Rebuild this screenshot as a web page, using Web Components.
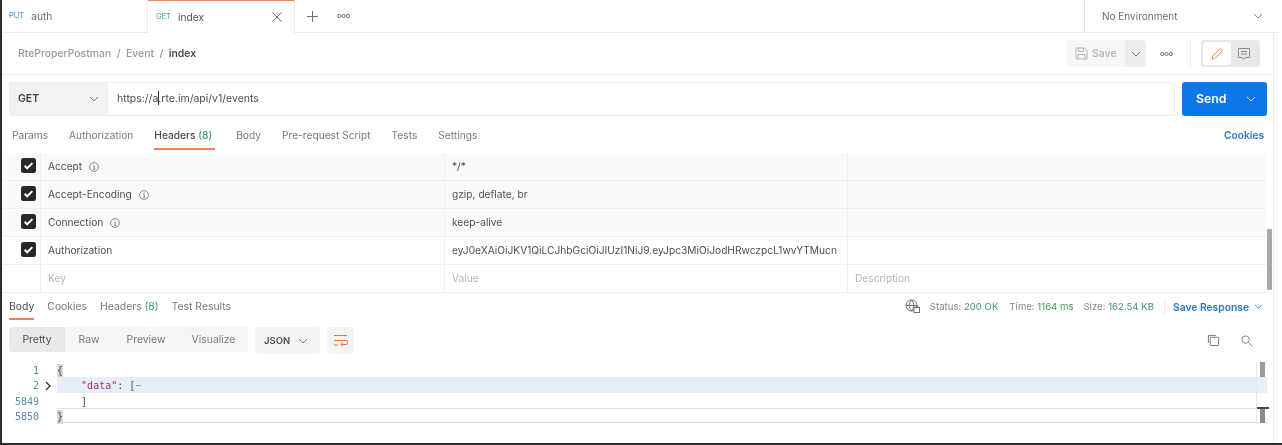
<!DOCTYPE html>
<html><head><meta charset="utf-8"><title>Postman</title>
<style>
html,body{margin:0;padding:0;background:#fff;height:445px;overflow:hidden}
body{font:11px/16px Inter,"Liberation Sans",sans-serif;color:#505050}
</style></head><body>
<pm-app>
  <pm-tabbar></pm-tabbar>
  <pm-crumbs></pm-crumbs>
  <pm-urlbar></pm-urlbar>
  <pm-reqtabs></pm-reqtabs>
  <pm-headers></pm-headers>
  <pm-restabs></pm-restabs>
  <pm-restools></pm-restools>
  <pm-code></pm-code>
</pm-app>
<script>
const chev=(s=10,c='#808080')=>`<svg width="${s}" height="${s}" viewBox="0 0 10 10" fill="none" stroke="${c}" stroke-width="1"><path d="M1 3l4 4 4-4"/></svg>`;
const dots=`<svg width="13" height="6" viewBox="0 0 13 6" fill="none" stroke="#707070" stroke-width="1"><circle cx="2.2" cy="3" r="1.6"/><circle cx="6.5" cy="3" r="1.6"/><circle cx="10.8" cy="3" r="1.6"/></svg>`;
function def(name,css,html){
  customElements.define(name,class extends HTMLElement{
    constructor(){super();this.attachShadow({mode:'open'}).innerHTML=`<style>${css}</style>${html}`;}
  });
}
def('pm-app',`:host{display:block;width:1280px;height:443px;box-sizing:border-box;border-left:2px solid #2b2b2b;position:relative;background:#fff;filter:blur(.45px)}
 .bar{position:absolute;left:-2px;top:443px;width:1282px;height:2px;background:#2b2b2b}
 .rule{position:absolute;left:1271px;top:33px;width:1px;height:410px;background:#ececec}`,
 `<slot></slot><div class="rule"></div><div class="bar"></div>`);
def('pm-tabbar',`:host{display:flex;height:33px;box-sizing:border-box;border-bottom:1px solid #ececec;align-items:stretch;color:#6b6b6b}
 .tab{display:flex;align-items:center;box-sizing:border-box;width:146px;padding-left:7px;gap:7px;font-size:10.2px;border-right:1px solid #ececec}
 .tab.on{width:147px;margin-bottom:-1px;background:#fff;border-top:1px solid #f4845a;padding-left:8px;color:#505050;position:relative}
 .m{font-size:7.5px}.put{color:#3f8fe0}.get{color:#45b57a}
 .x{margin-left:auto;margin-right:12px;display:flex}
 .plus{margin-left:12px;display:flex;align-items:center}
 .dots{margin-left:19px;display:flex;align-items:center}
 .env{margin-left:auto;width:196px;box-sizing:border-box;border-left:1px solid #e6e6e6;display:flex;align-items:center;padding:0 17px 0 17px;justify-content:space-between;font-size:10px;color:#6d6d6d}`,
 `<div class="tab"><span class="m put">PUT</span><span>auth</span></div>
  <div class="tab on"><span class="m get">GET</span><span>index</span><span class="x"><svg width="10" height="10" viewBox="0 0 10 10" stroke="#707070" stroke-width="1"><path d="M.5.5l9 9M9.500.5l-9 9"/></svg></span></div>
  <span class="plus"><svg width="11" height="11" viewBox="0 0 11 11" stroke="#707070" stroke-width="1"><path d="M5.500 0v11M0 5.500h11"/></svg></span>
  <span class="dots">${dots}</span>
  <div class="env"><span>No Environment</span>${chev()}</div>`);
def('pm-crumbs',`:host{display:flex;height:42px;box-sizing:border-box;width:1271px;border-bottom:1px solid #ececec;align-items:center;padding:0 13px 0 16px;color:#9a9a9a;font-size:10.4px;font-weight:500}
 b{color:#4a4a4a;font-weight:600}.s{margin:0 5.500px}
 .r{margin-left:auto;display:flex;align-items:center}
 .save{display:flex;align-items:center;gap:4px;width:59px;height:27px;box-sizing:border-box;padding-left:9px;background:#f7f7f7;border-radius:3px 0 0 3px;color:#b8b8b8;font-weight:600}
 .sd{width:21px;height:27px;background:#ededed;display:flex;align-items:center;justify-content:center;border-radius:0 3px 3px 0}
 .d{margin:0 17px 0 14px;display:flex}
 .sep{width:1px;height:27px;background:#efefef;margin-right:10px}
 .sw{display:flex;width:59px;height:27px;background:#e8e8e8;border-radius:3px;box-sizing:border-box;padding:2px}
 .sw span{display:flex;align-items:center;justify-content:center;flex:1}
 .sw .a{background:#fff;border-radius:3px}`,
 `<span>RteProperPostman</span><span class="s">/</span><span>Event</span><span class="s">/</span><b>index</b>
  <div class="r"><div class="save"><svg width="13" height="13" viewBox="0 0 13 13" fill="none" stroke="#b5b5b5"><path d="M1 1h8.500L12 3.500V12H1zM3.500 1v3.500h5V1M3 12V7.500h7V12"/></svg>Save</div><div class="sd">${chev(10,'#777')}</div>
  <span class="d">${dots}</span><span class="sep"></span>
  <div class="sw"><span class="a"><svg width="14" height="14" viewBox="0 0 14 14" fill="none" stroke="#f0805a"><path d="M2 12l.7-3L9.500 2.200a1.200 1.200 0 0 1 1.700 0l.6.6a1.200 1.200 0 0 1 0 1.700L5 11.300z"/></svg></span><span><svg width="14" height="14" viewBox="0 0 14 14" fill="none" stroke="#8a8a8a"><path d="M1.500 1.500h11v9H8L6.500 12.500 5 10.500H1.500zM4 4.500h6M4 7h6"/></svg></span></div></div>`);
def('pm-urlbar',`:host{display:flex;box-sizing:border-box;width:1271px;height:34px;margin-top:7px;padding:0 5px 0 7px;align-items:stretch}
 .m{width:98px;box-sizing:border-box;background:#f2f2f2;border:1px solid #ececec;border-right:0;border-radius:3px 0 0 3px;display:flex;align-items:center;justify-content:space-between;padding:0 8px 0 8px;font-weight:600;font-size:10.5px;color:#404040}
 .u{width:1068px;box-sizing:border-box;border:1px solid #ececec;border-radius:0 3px 3px 0;display:flex;align-items:center;padding-left:9px;color:#505050;font-size:10.5px;white-space:pre}
 i{display:inline-block;width:1px;height:14px;background:#303030;margin:0 -.5px;vertical-align:-3px}
 .send{margin-left:7px;width:85px;background:#0d76e8;border-radius:3px;color:#fff;font-weight:600;font-size:12.3px;display:flex;align-items:center;justify-content:space-between;box-sizing:border-box;padding:0 11px 0 14px}`,
 `<div class="m"><span>GET</span>${chev()}</div><div class="u"><span>https://a<i></i>.rte.im/api/v1/events</span></div><div class="send"><span>Send</span>${chev(10,'#cfe3fb')}</div>`);
def('pm-reqtabs',`:host{display:flex;box-sizing:border-box;width:1271px;height:37px;padding:2px 9px 0 10px;color:#7a7a7a;font-size:10.2px;gap:21px}
 div{height:32px;display:flex;align-items:center;box-sizing:border-box;border-bottom:2px solid transparent;padding-top:3px}
 .on{color:#4a4a4a;border-color:#f0805a;font-weight:500;padding-right:3px}
 em{font-style:normal;color:#3fa06a}
 .c{margin-left:auto;color:#2f78c4;font-weight:600}`,
 `<div>Params</div><div>Authorization</div><div class="on"><span>Headers&nbsp;<em>(8)</em></span></div><div>Body</div><div>Pre-request Script</div><div>Tests</div><div>Settings</div><div class="c">Cookies</div>`);
def('pm-row',`:host{display:grid;grid-template-columns:38px 404px 403px 1fr;height:28px;box-sizing:border-box;border-bottom:1px solid #eee;color:#505050;font-size:10.2px}
 :host([gray]){background:#fafafa}
 .c{display:flex;align-items:center;justify-content:flex-end;padding:0 4px 2px 0}
 .k,.v,.d{display:flex;align-items:center;padding:0 7px 2px;border-left:1px solid #efefef;white-space:nowrap;overflow:hidden}
 :host([ph]) .k,:host([ph]) .v,:host([ph]) .d{color:#b5b5b5}`,
 `<div class="c"><slot name="check"></slot></div><div class="k"><slot name="k"></slot></div><div class="v"><slot name="v"></slot></div><div class="d"><slot name="d"></slot></div>`);
def('pm-check',`:host{display:flex;width:15px;height:15px;background:#282828;border-radius:2.5px;align-items:center;justify-content:center}`,
 `<svg width="11" height="11" viewBox="0 0 10 10" fill="none" stroke="#fff" stroke-width="1.800"><path d="M1.500 5.200l2.300 2.300 4.700-4.700"/></svg>`);
def('pm-info',`:host{display:inline-flex;margin-left:7px;vertical-align:-2px}`,
 `<svg width="10" height="10" viewBox="0 0 10 10" fill="none" stroke="#707070" stroke-width=".8"><circle cx="5" cy="5" r="4.400"/><path d="M4.200 4.500H5.200V7.300M4 7.400h2.300M5 2.400v1"/></svg>`);
def('pm-headers',`:host{display:block;position:relative;width:1264px}
 .sb{position:absolute;left:1265px;top:76px;width:5px;height:61px;background:#a9a9a9;border-radius:1px}`,
 `<slot></slot><div class="sb"></div>`);
def('pm-restabs',`:host{display:flex;box-sizing:border-box;width:1271px;height:34px;padding:0 10px 0 7px;align-items:stretch;color:#7a7a7a;font-size:10.4px}
 .t{display:flex;height:27px;align-items:center;box-sizing:border-box;border-bottom:2px solid transparent;margin-right:13px;padding-top:2px;white-space:pre}
 .on{color:#4a4a4a;border-color:#f0805a}
 em{font-style:normal;color:#3fa06a}
 .r{margin-left:auto;display:flex;align-items:center;height:27px;box-sizing:border-box;font-size:9.6px;color:#8a8a8a;white-space:pre}
 .g{color:#3f9a62}.s{display:inline-block;margin-left:11px}.s2{margin-left:10px}
 .sep{width:1px;height:15px;background:#ececec;margin:0 8px 0 10px}
 .sv{color:#2f78c4;font-weight:600;font-size:10.3px;margin-right:5px}
 svg.gl{margin-right:10px}`,
 `<div class="t on">Body</div><div class="t">Cookies</div><div class="t">Headers <em>(8)</em></div><div class="t">Test Results</div>
  <div class="r"><svg class="gl" width="15" height="15" viewBox="0 0 15 15" fill="none" stroke="#707070"><circle cx="6.500" cy="6.500" r="5.500"/><path d="M1 6.500h11M6.500 1c-3 3.500-3 7.500 0 11M6.500 1c3 3.500 3 7.500 0 11"/><rect x="9" y="8.500" width="5.500" height="5" fill="#fff"/><path d="M10.500 8.500c0-2 3-2 3 0"/></svg><span>Status: <span class="g">200 OK</span></span><span class="s">Time: <span class="g">1164 ms</span></span><span class="s s2">Size: <span class="g">162.54 KB</span></span><span class="sep"></span><span class="sv">Save Response</span>${chev(9,'#2f78c4')}</div>`);
def('pm-restools',`:host{display:flex;box-sizing:border-box;width:1271px;height:27px;padding:0 20px 0 7px;align-items:flex-start;color:#7a7a7a;font-size:10.4px}
 .g{display:flex;width:239px;height:25px;background:#f6f6f6;border-radius:3px}
 .g span{display:flex;align-items:center;justify-content:center;height:25px}
 .p{width:56px;background:#e9e9e9;border-radius:3px 0 0 3px;color:#4f4f4f}
 .j{margin-left:7px;width:65px;height:27px;background:#f4f4f4;border-radius:3px;display:flex;align-items:center;justify-content:space-between;box-sizing:border-box;padding:0 12px 0 9px;font-size:9.500px;font-weight:600;color:#505050}
 .w{margin-left:7px;width:27px;height:27px;background:#f4f4f4;border-radius:3px;display:flex;align-items:center;justify-content:center}
 .r{margin-left:auto;display:flex;gap:21px;align-items:center;height:27px}`,
 `<div class="g"><span class="p">Pretty</span><span style="width:48px">Raw</span><span style="width:66px">Preview</span><span style="width:69px">Visualize</span></div>
  <div class="j"><span>JSON</span>${chev(10,'#808080')}</div>
  <div class="w"><svg width="15" height="13" viewBox="0 0 15 13" fill="none" stroke="#f0704a"><path d="M1 1.500h13M1 6.500h12a2 2 0 0 1 0 4H8M10 8.500l-2.200 2 2.200 2M1 11h4"/></svg></div>
  <div class="r"><svg width="13" height="13" viewBox="0 0 14 14" fill="none" stroke="#707070"><path d="M1.500 9.500V1.500H9.500"/><rect x="3.500" y="3.500" width="9" height="9" rx="1"/></svg><svg width="12" height="12" viewBox="0 0 13 13" fill="none" stroke="#808080"><circle cx="5" cy="5" r="4"/><path d="M8 8l4.500 4.500"/></svg></div>`);
def('pm-code',`:host{display:block;position:relative;box-sizing:border-box;width:1271px;padding-top:8.5px;font:10px/15.500px "DejaVu Sans Mono","Liberation Mono",monospace;color:#505050}
 .l{display:flex;height:15.500px;white-space:pre}
 .n{width:37px;text-align:right;color:#5a8aa5;flex:none}
 .a{width:18px;flex:none;display:flex;align-items:center;justify-content:center}
 .t{flex:none;width:1210px;box-sizing:border-box}
 .hl .t{background:#e4effa;margin-top:-1px;padding-top:1px;height:15.500px}
 .bb .t{border-bottom:1px solid #e2e2e2}
 .end .t{height:14px}
 .k{color:#a8344d}
 .b{display:inline-block;background:#d6d6d6;width:6px;height:14px;line-height:14px}
 .sb1{position:absolute;left:1258px;top:8px;width:5px;height:15px;background:#9a9a9a}
 .sb2{position:absolute;left:1258px;top:53px;width:5px;height:16px;background:#8a8a8a}
 .sb2:before{content:"";position:absolute;left:-3px;top:0;width:12px;height:2px;background:#444}
 .vl{position:absolute;left:1254px;top:8px;height:62px;width:1px;background:#e6e6e6}`,
 `<div class="l"><span class="n">1</span><span class="a"></span><span class="t"><span class="b">{</span></span></div>
  <div class="l hl"><span class="n">2</span><span class="a"><svg width="8" height="10" viewBox="0 0 8 10" fill="none" stroke="#333" stroke-width="1.300"><path d="M2 1l4 4-4 4"/></svg></span><span class="t">    <span class="k">"data"</span>: [<span style="color:#888">&#8722;</span></span></div>
  <div class="l bb"><span class="n">5849</span><span class="a"></span><span class="t">    ]</span></div>
  <div class="l bb end"><span class="n">5850</span><span class="a"></span><span class="t"><span class="b">}</span></span></div>
  <div class="vl"></div><div class="sb1"></div><div class="sb2"></div>`);
const rows=[['Accept',1,'*/*',0],['Accept-Encoding',1,'gzip, deflate, br',0],['Connection',1,'keep-alive',0],['Authorization',0,'eyJ0eXAiOiJKV1QiLCJhbGciOiJIUzI1NiJ9.eyJpc3MiOiJodHRwczpcL1wvYTMucn',1],['Key',0,'Value',2]];
const H=document.querySelector('pm-headers');
H.innerHTML=rows.map((r,i)=>`<pm-row ${i<3?'gray':''} ${r[3]==2?'ph':''}>${r[3]==2?'':'<pm-check slot="check"></pm-check>'}<span slot="k">${r[0]}${r[1]?'<pm-info></pm-info>':''}</span><span slot="v">${r[2]}</span>${r[3]==2?'<span slot="d">Description</span>':''}</pm-row>`).join('');
</script>
</body></html>
